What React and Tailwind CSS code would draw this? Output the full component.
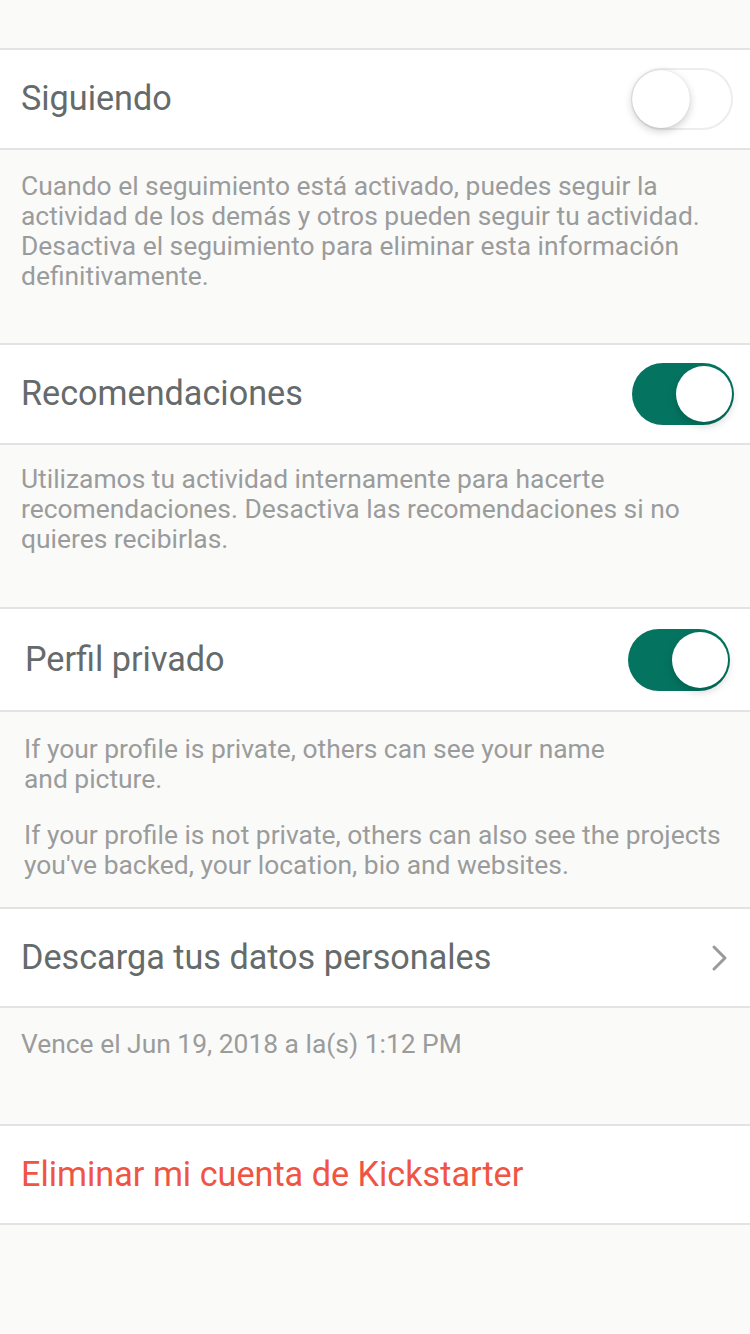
import React from "react";

function Toggle({ on, className = "" }) {
  if (on) {
    return (
      <div className={"relative w-[102px] h-[62px] rounded-full bg-[#047460] shrink-0 " + className}>
        <div className="absolute right-[2px] top-[3px] w-[56px] h-[56px] rounded-full bg-white shadow-[0_4px_8px_rgba(0,0,0,0.18)]" />
      </div>
    );
  }
  return (
    <div className={"relative w-[102px] h-[62px] rounded-full bg-white border-2 border-[#ededed] shrink-0 " + className}>
      <div className="absolute left-[-1px] top-[0px] w-[58px] h-[58px] rounded-full bg-white shadow-[0_3px_8px_rgba(0,0,0,0.2),0_0_1px_rgba(0,0,0,0.15)]" />
    </div>
  );
}

const font = { fontFamily: "Roboto, 'Liberation Sans', sans-serif" };

export default function App() {
  return (
    <div className="w-[750px] h-[1334px] bg-[#fafaf9] overflow-hidden" style={font}>
      <div className="h-[48px]" />
      {/* Siguiendo */}
      <div className="h-[102px] bg-white border-y-2 border-[#e3e3e3] flex items-center justify-between pl-[21px] pr-[17px]">
        <span className="text-[34.2px] text-[#656a6a]">Siguiendo</span>
        <Toggle on={false} />
      </div>
      <div className="h-[193px] pl-[21px] pt-[21px] text-[26.4px] leading-[30px] text-[#9a9c9c] whitespace-nowrap">
        Cuando el seguimiento está activado, puedes seguir la<br />
        actividad de los demás y otros pueden seguir tu actividad.<br />
        Desactiva el seguimiento para eliminar esta información<br />
        definitivamente.
      </div>
      {/* Recomendaciones */}
      <div className="h-[102px] bg-white border-y-2 border-[#e3e3e3] flex items-center justify-between pl-[21px] pr-[16px]">
        <span className="text-[34.2px] text-[#656a6a]">Recomendaciones</span>
        <Toggle on />
      </div>
      <div className="h-[162px] pl-[21px] pt-[19px] text-[26.4px] leading-[30px] text-[#9a9c9c] whitespace-nowrap">
        Utilizamos tu actividad internamente para hacerte<br />
        recomendaciones. Desactiva las recomendaciones si no<br />
        quieres recibirlas.
      </div>
      {/* Perfil privado */}
      <div className="h-[105px] bg-white border-y-2 border-[#e3e3e3] flex items-center justify-between pl-[25px] pr-[20px]">
        <span className="text-[34.2px] text-[#656a6a]">Perfil privado</span>
        <Toggle on />
      </div>
      <div className="h-[195px] pl-[24px] pt-[22px] text-[26.4px] leading-[30px] text-[#9a9c9c] whitespace-nowrap">
        If your profile is private, others can see your name<br />
        and picture.<br />
        <div className="h-[26px]" />
        If your profile is not private, others can also see the projects<br />
        you've backed, your location, bio and websites.
      </div>
      {/* Descarga */}
      <div className="h-[101px] bg-white border-y-2 border-[#e3e3e3] flex items-center justify-between pl-[21px] pr-[20px]">
        <span className="text-[34.2px] text-[#656a6a]">Descarga tus datos personales</span>
        <svg width="20" height="28" viewBox="0 0 20 28" fill="none">
          <path d="M4 3 L15 14 L4 25" stroke="#9a9a9a" strokeWidth="3" strokeLinecap="round" strokeLinejoin="round" />
        </svg>
      </div>
      <div className="h-[116px] pl-[21px] pt-[21px] text-[26.4px] leading-[30px] text-[#9a9c9c] whitespace-nowrap">
        Vence el Jun 19, 2018 a la(s) 1:12 PM
      </div>
      {/* Eliminar */}
      <div className="h-[101px] bg-white border-y-2 border-[#e3e3e3] flex items-center pl-[21px]">
        <span className="text-[34.2px] text-[#f05443]">Eliminar mi cuenta de Kickstarter</span>
      </div>
    </div>
  );
}
